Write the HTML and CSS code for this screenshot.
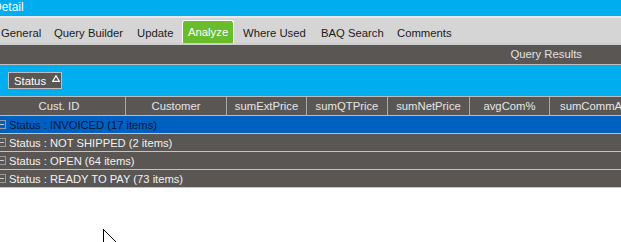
FILE: index.html
```html
<!DOCTYPE html>
<html>
<head>
    <title>Detail</title>
    <link rel="stylesheet" href="styles.css">
</head>
<body>
    <div class="window">
        <div class="title-bar">Detail</div>

        <div class="tab-bar">
            <div class="tab tab-first">General</div>
            <div class="tab tab-qb">Query Builder</div>
            <div class="tab tab-update">Update</div>
            <div class="tab tab-active">Analyze</div>
            <div class="tab tab-where">Where Used</div>
            <div class="tab tab-baq">BAQ Search</div>
            <div class="tab">Comments</div>
        </div>

        <div class="panel-header">Query Results</div>

        <div class="group-area">
            <div class="group-chip">
                <span>Status</span>
                <svg class="sort-icon" width="8" height="7" viewBox="0 0 8 7">
                    <path d="M4 0.8 L7.3 6.3 L0.7 6.3 Z" fill="none" stroke="#ffffff" stroke-width="1.2"/>
                </svg>
            </div>
        </div>

        <div class="grid-header">
            <div class="col col-1">Cust. ID</div>
            <div class="col col-2">Customer</div>
            <div class="col col-3">sumExtPrice</div>
            <div class="col col-4">sumQTPrice</div>
            <div class="col col-5">sumNetPrice</div>
            <div class="col col-6">avgCom%</div>
            <div class="col col-7">sumCommAmt</div>
        </div>

        <div class="group-row selected"><span class="expander"></span>Status : INVOICED (17 items)</div>
        <div class="group-row"><span class="expander"></span>Status : NOT SHIPPED (2 items)</div>
        <div class="group-row"><span class="expander"></span>Status : OPEN (64 items)</div>
        <div class="group-row"><span class="expander"></span>Status : READY TO PAY (73 items)</div>
    </div>

    <!-- mouse pointer captured in the screenshot -->
    <svg class="cursor" width="14" height="14" viewBox="0 0 14 14">
        <path d="M0.5 0 L0.5 14 M0.5 0.5 L13 13" stroke="#000" stroke-width="1" fill="none"/>
    </svg>
</body>
</html>
```

FILE: styles.css
```css
body {
    margin: 0;
    background: #ffffff;
    font-family: "Liberation Sans", Arial, sans-serif;
    font-size: 11.3px;
    width: 621px;
    height: 242px;
    overflow: hidden;
    position: relative;
}

.window {
    width: 621px;
    overflow: hidden;
}

.title-bar {
    height: 16px;
    line-height: 15px;
    background: #00adee;
    color: #ffffff;
    font-size: 12px;
    text-indent: -7px;
}

.tab-bar {
    display: flex;
    align-items: flex-end;
    height: 25px;
    border-top: 2px solid #e9e9e9;
    background: #d5d5d5;
    color: #1e1a1a;
    white-space: nowrap;
}

.tab {
    height: 25px;
    line-height: 14px;
    padding: 8px 0 0 6px;
    box-sizing: border-box;
}

.tab-first {
    margin-left: -5px;
    width: 53px;
}

.tab-qb {
    width: 83px;
}

.tab-update {
    width: 51px;
}

.tab-active {
    width: 52px;
    height: 23px;
    margin-right: 3px;
    padding: 4px 0 0 5px;
    background: #69bc2c;
    color: #ffffff;
    border: 1px solid #ffffff;
    border-bottom: none;
    border-radius: 3px 3px 0 0;
}

.tab-where {
    width: 78px;
}

.tab-baq {
    width: 76px;
}

.panel-header {
    height: 19px;
    line-height: 19px;
    border-top: 2px solid #cfcfcf;
    border-bottom: 1px solid #bdbdbd;
    background: #595654;
    color: #e2e2e2;
    text-align: right;
    padding-right: 39px;
}

.group-area {
    height: 31px;
    background: #00adee;
    padding: 7px 0 0 8px;
    box-sizing: border-box;
}

.group-chip {
    display: inline-flex;
    align-items: center;
    gap: 6px;
    height: 17px;
    width: 54px;
    box-sizing: border-box;
    padding-left: 5px;
    background: #595654;
    border: 1px solid #bdbdbd;
    color: #ffffff;
    font-size: 11.3px;
}

.sort-icon {
    margin-top: -4px;
}

.grid-header {
    display: flex;
    height: 18px;
    border-top: 1px solid #bdbdbd;
    border-bottom: 1px solid #bdbdbd;
    background: #595654;
    color: #e6e6e6;
    white-space: nowrap;
}

.col {
    flex: none;
    box-sizing: border-box;
    border-right: 1px solid #aaaaaa;
    text-align: center;
    line-height: 18px;
    overflow: hidden;
}

.col-1 { width: 133px; margin-left: -7px; }
.col-2 { width: 101px; }
.col-3 { width: 80px; }
.col-4 { width: 81px; }
.col-5 { width: 82px; }
.col-6 { width: 80px; }
.col-7 { width: 100px; text-align: left; padding-left: 10px; }

.group-row {
    display: flex;
    align-items: center;
    height: 17px;
    border-bottom: 1px solid #c4c4c4;
    background: #595654;
    color: #f2f2f2;
    font-size: 11.2px;
    white-space: nowrap;
}

.group-row.selected {
    background: #0060c2;
    color: #0b1633;
}

.expander {
    position: relative;
    width: 9px;
    height: 9px;
    margin-left: -3px;
    margin-right: 3px;
    border: 1px solid #9a9a9a;
    box-sizing: border-box;
}

.expander::after {
    content: "";
    position: absolute;
    left: 1px;
    right: 1px;
    top: 3px;
    height: 1px;
    background: #c8c8c8;
}

.cursor {
    position: absolute;
    left: 103px;
    top: 229px;
}
```
